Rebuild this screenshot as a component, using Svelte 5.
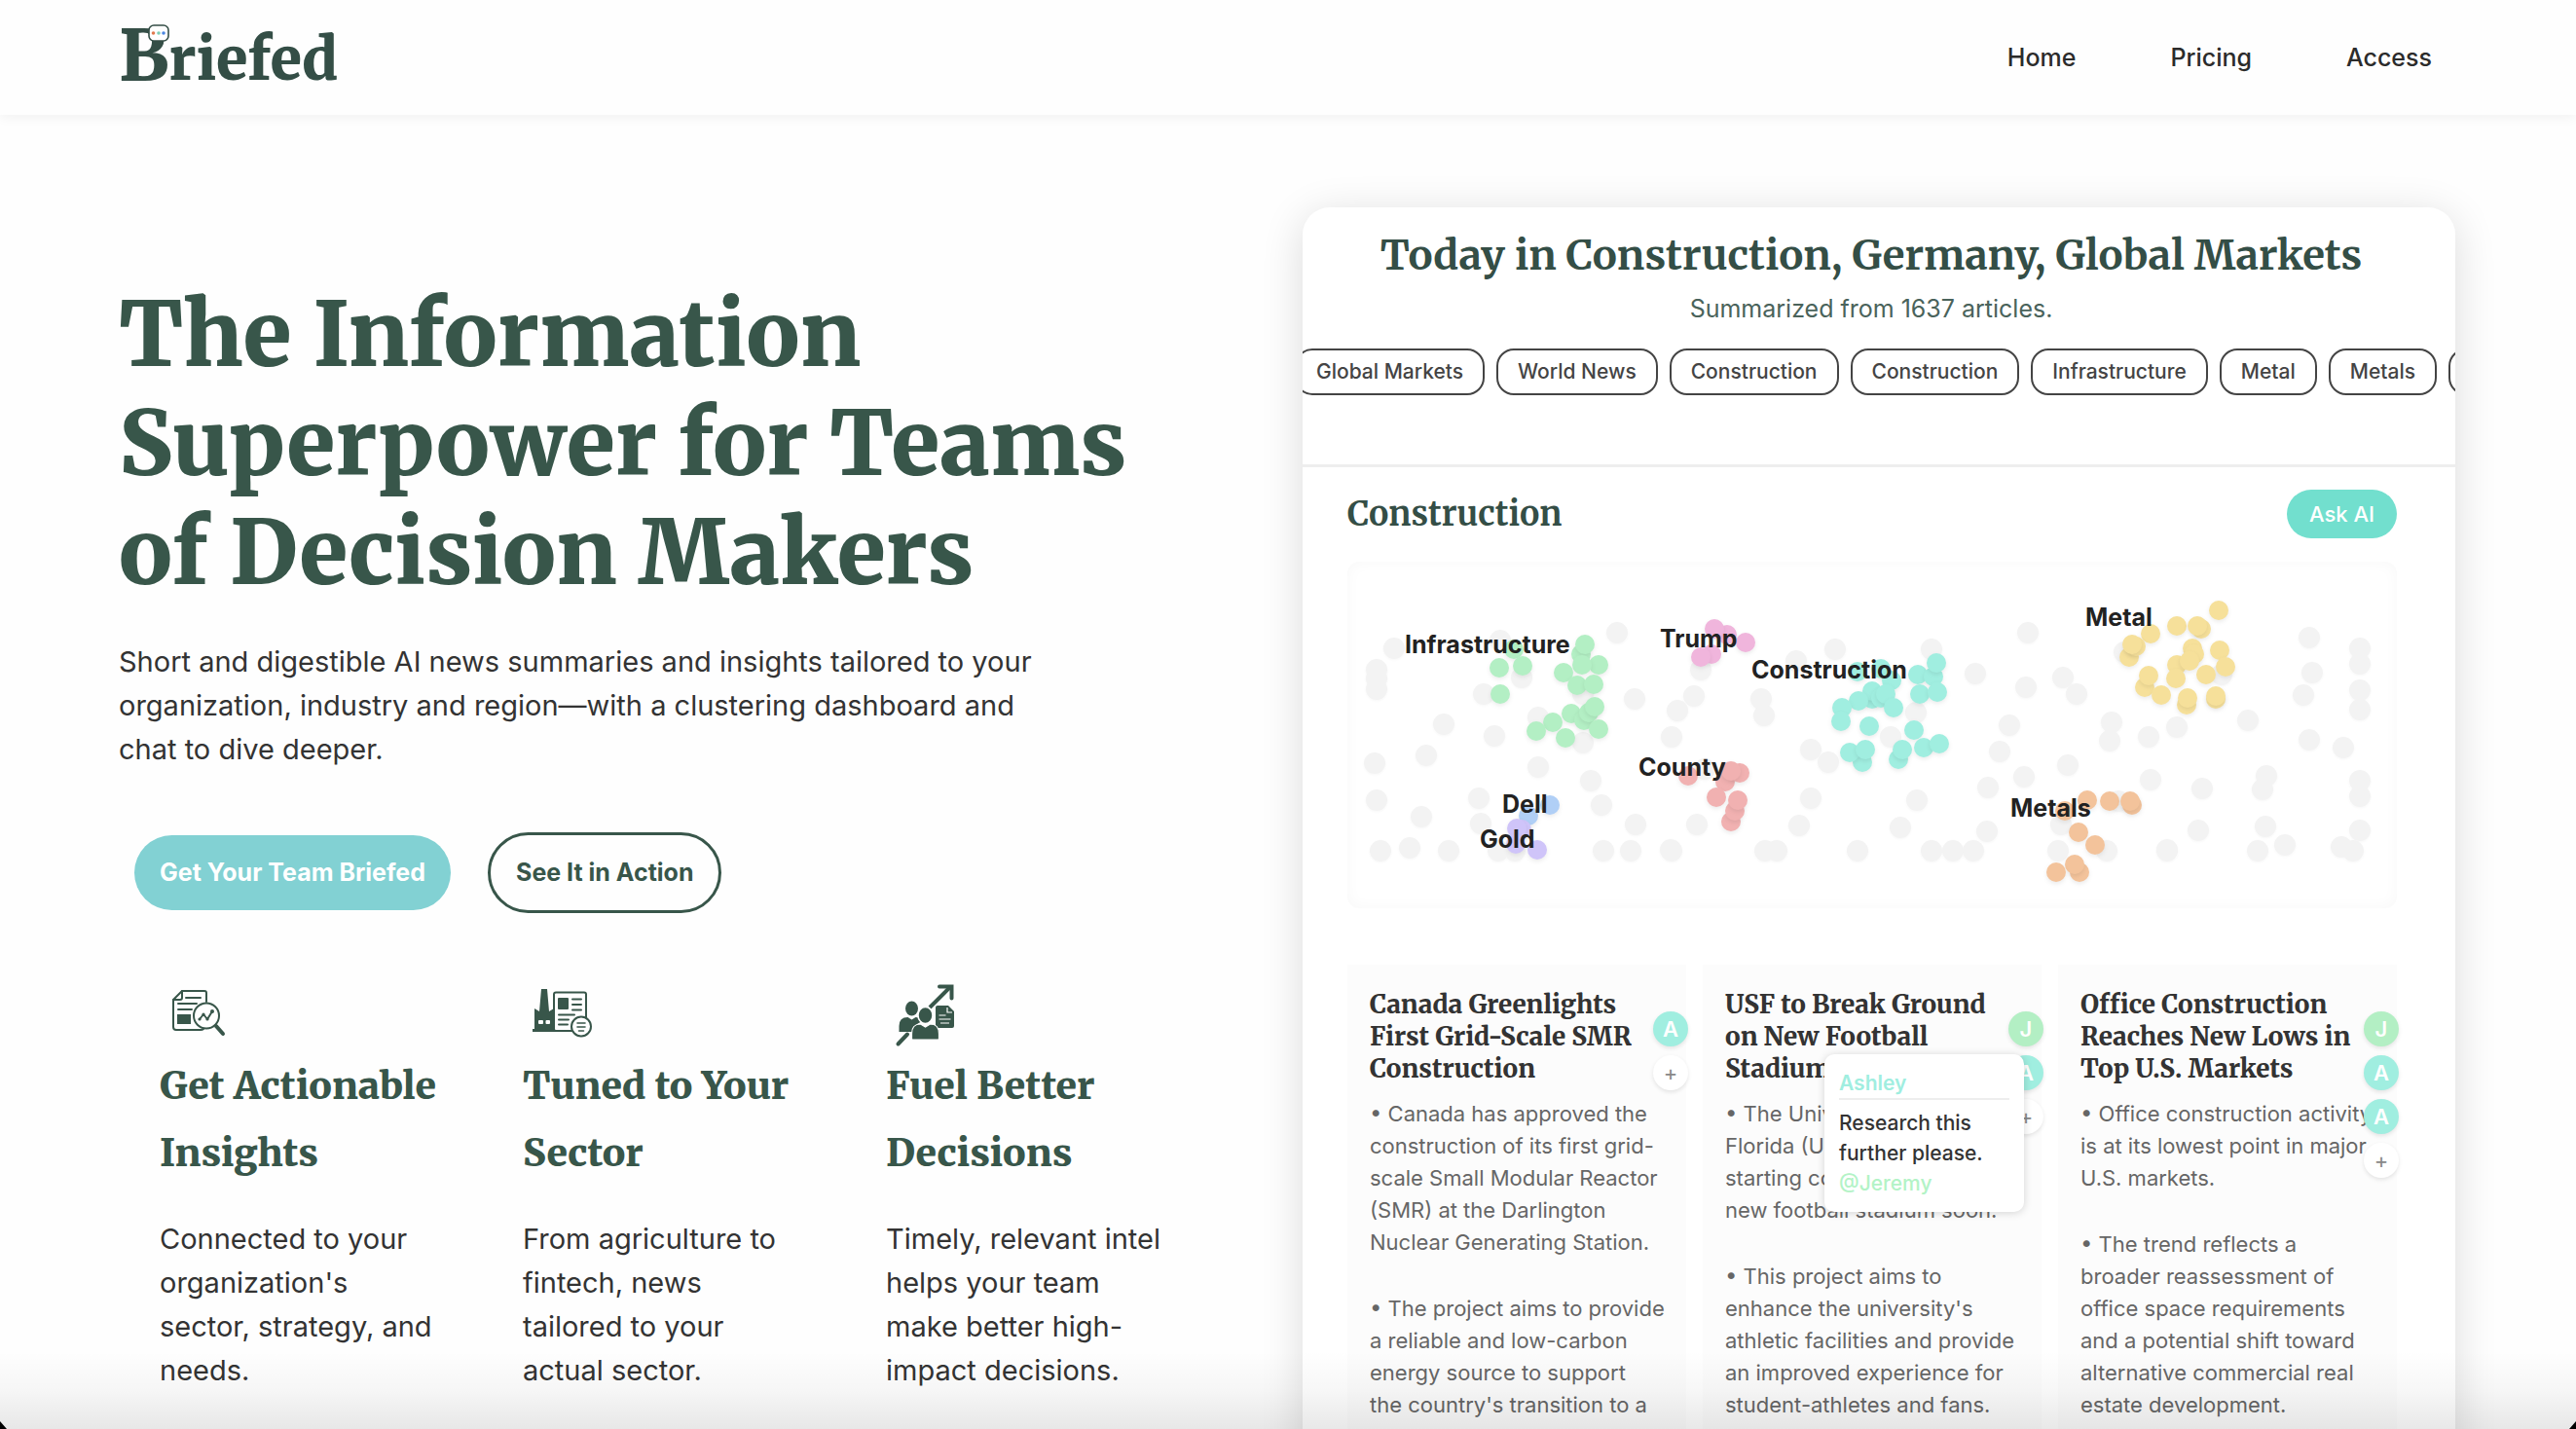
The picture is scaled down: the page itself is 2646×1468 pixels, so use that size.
<script>
  const links = ['Home', 'Pricing', 'Access'];

  const topics = ['Global Markets', 'World News', 'Construction', 'Construction', 'Infrastructure', 'Metal', 'Metals', 'County'];

  const features = [
    { icon: 'insights', title: ['Get Actionable', 'Insights'], text: "Connected to your organization's sector, strategy, and needs." },
    { icon: 'sector', title: ['Tuned to Your', 'Sector'], text: 'From agriculture to fintech, news tailored to your actual sector.' },
    { icon: 'decisions', title: ['Fuel Better', 'Decisions'], text: 'Timely, relevant intel helps your team make better high-impact decisions.' }
  ];

  const noise = [
    [48, 89], [157, 81], [277, 73], [30, 111], [30, 120], [30, 131], [140, 136], [179, 119], [99, 167], [151, 179],
    [196, 160], [242, 186], [81, 199], [28, 207], [196, 211], [250, 225], [30, 245], [135, 243], [261, 250], [76, 262],
    [137, 269], [296, 270], [34, 297], [64, 294], [104, 297], [155, 297], [172, 297], [263, 297], [291, 297], [332, 296],
    [333, 297], [242, 136], [295, 141], [356, 138], [339, 153], [333, 180], [363, 111], [359, 270], [429, 297], [441, 297],
    [425, 141], [428, 158], [461, 102], [501, 90], [476, 193], [494, 206], [476, 243], [464, 271], [524, 297], [367, 213],
    [600, 90], [699, 73], [645, 115], [697, 129], [735, 119], [749, 136], [558, 180], [584, 155], [680, 168], [670, 195],
    [785, 165], [783, 184], [823, 180], [852, 170], [925, 163], [740, 209], [695, 221], [658, 232], [825, 224], [878, 233],
    [585, 245], [568, 273], [657, 277], [600, 297], [622, 297], [643, 297], [730, 297], [733, 270], [780, 297], [842, 296],
    [842, 297], [874, 276], [943, 272], [963, 291], [935, 297], [944, 220], [940, 234], [988, 78], [1040, 89], [1040, 105],
    [1040, 132], [1040, 152], [991, 114], [982, 137], [988, 183], [1023, 191], [1040, 225], [1040, 241], [1040, 276],
    [1021, 293], [1033, 297], [798, 93], [898, 116], [792, 246]
  ];

  const clusters = [
    { name: 'Infrastructure', at: [59, 94], color: '#b3efc4', dots: [[171, 90], [156, 109], [180, 107], [157, 136], [240, 95], [244, 85], [258, 106], [241, 106], [222, 114], [236, 127], [253, 126], [230, 156], [243, 163], [248, 155], [254, 149], [211, 165], [194, 174], [258, 172], [224, 181]] },
    { name: 'Trump', at: [321, 88], color: '#f0b5dc', dots: [[390, 75], [377, 69], [409, 83], [374, 95], [363, 98]] },
    { name: 'Construction', at: [415, 120], color: '#a0eee0', dots: [[524, 113], [539, 141], [539, 133], [525, 143], [508, 150], [507, 164], [536, 169], [529, 206], [516, 196], [532, 193], [548, 110], [559, 122], [548, 140], [553, 136], [561, 150], [586, 116], [602, 118], [605, 104], [588, 136], [606, 134], [582, 173], [566, 203], [570, 193], [592, 191], [608, 187]] },
    { name: 'Metal', at: [758, 66], color: '#f6e09a', dots: [[895, 50], [852, 66], [877, 69], [873, 66], [825, 74], [803, 98], [810, 87], [806, 85], [868, 89], [870, 95], [852, 106], [865, 102], [896, 91], [902, 108], [851, 120], [882, 116], [819, 129], [823, 117], [836, 137], [862, 147], [863, 140], [892, 141], [892, 138]] },
    { name: 'County', at: [299, 220], color: '#f1b1b1', dots: [[350, 220], [388, 226], [403, 217], [394, 215], [379, 242], [394, 267], [398, 256], [401, 245]] },
    { name: 'Dell', at: [159, 258], color: '#b0cff6', dots: [[208, 250], [186, 261]] },
    { name: 'Gold', at: [136, 294], color: '#cfc4f9', dots: [[179, 275], [174, 274], [173, 290], [195, 296]] },
    { name: 'Metals', at: [681, 262], color: '#f3c39b', dots: [[737, 256], [760, 245], [783, 246], [806, 250], [804, 246], [751, 278], [768, 291], [752, 319], [747, 311], [728, 319]] }
  ];

  const articles = [
    {
      title: ['Canada Greenlights', 'First Grid-Scale SMR', 'Construction'],
      points: [
        ['Canada has approved the', 'construction of its first grid-', 'scale Small Modular Reactor', '(SMR) at the Darlington', 'Nuclear Generating Station.'],
        ['The project aims to provide', 'a reliable and low-carbon', 'energy source to support', "the country's transition to a"]
      ],
      people: ['A']
    },
    {
      title: ['USF to Break Ground', 'on New Football', 'Stadium'],
      points: [
        ['The University of South', 'Florida (USF) will be', 'starting construction of a', 'new football stadium soon.'],
        ['This project aims to', "enhance the university's", 'athletic facilities and provide', 'an improved experience for', 'student-athletes and fans.']
      ],
      people: ['J', 'A'],
      note: { author: 'Ashley', lines: ['Research this', 'further please.'], mention: '@Jeremy' }
    },
    {
      title: ['Office Construction', 'Reaches New Lows in', 'Top U.S. Markets'],
      points: [
        ['Office construction activity', 'is at its lowest point in major', 'U.S. markets.'],
        ['The trend reflects a', 'broader reassessment of', 'office space requirements', 'and a potential shift toward', 'alternative commercial real', 'estate development.']
      ],
      people: ['J', 'A', 'A']
    }
  ];
</script>

<div class="page">
  <header>
    <a class="logo" href="#home" aria-label="Briefed">
      <span class="initial">B</span><span>riefed</span>
      <svg class="bubble" viewBox="0 0 22 18" aria-hidden="true">
        <rect x="1" y="1" width="20" height="16" rx="5" fill="#fff" stroke="#344e46" stroke-width="1.6" />
        <circle cx="5.5" cy="9" r="1.8" fill="#e0794f" />
        <circle cx="11" cy="9" r="1.8" fill="#7ccfb9" />
        <circle cx="16" cy="9" r="1.8" fill="#4a86e0" />
      </svg>
    </a>
    <nav>
      {#each links as link}
        <a href="#{link.toLowerCase()}">{link}</a>
      {/each}
    </nav>
  </header>

  <main>
    <section class="intro">
      <h1>The Information<br />Superpower for Teams<br />of Decision Makers</h1>
      <p class="lead">
        Short and digestible AI news summaries and insights tailored to your<br />
        organization, industry and region—with a clustering dashboard and<br />
        chat to dive deeper.
      </p>
      <div class="actions">
        <button class="primary">Get Your Team Briefed</button>
        <button class="outline">See It in Action</button>
      </div>
      <div class="features">
        {#each features as feature}
          <article>
            <svg class="icon" viewBox="0 0 80 80" aria-hidden="true">
              {#if feature.icon === 'insights'}
                <g fill="none" stroke="#38564a" stroke-width="2" stroke-linecap="round" stroke-linejoin="round">
                  <path d="M48 28V19q0-2-2-2H23L14 26V54q0 3 3 3H42q2 0 3-1" />
                  <path d="M23 17v7q0 2-2 2h-7" />
                  <path d="M27 24H42M19 30H38M19 36H33" />
                  <circle cx="48" cy="42.5" r="13" fill="#fff" />
                  <path d="M41 46l4-5 4 5 5-8" />
                  <path d="M58 53l7 8" stroke-width="4" />
                </g>
                <rect x="18" y="41" width="14" height="10" fill="#38564a" />
                <g fill="#38564a"><circle cx="41" cy="46" r="1.6" /><circle cx="45" cy="41" r="1.6" /><circle cx="49" cy="46" r="1.6" /><circle cx="54" cy="38" r="2" /></g>
              {:else if feature.icon === 'sector'}
                <path fill="#38564a" d="M10 59v-3h2V35l5 3 2-23h6l2 23 5-3v21h18v3z" />
                <g fill="#fff"><rect x="16" y="47" width="5" height="4" rx="1" /><rect x="23.500" y="47" width="4.500" height="4" rx="1" /></g>
                <g fill="none" stroke="#38564a" stroke-width="2" stroke-linecap="round">
                  <rect x="32" y="18.500" width="33" height="39.500" rx="2" fill="#fff" />
                  <path d="M51 25.500h9M51 31h9M51 36.500h9M37 41.500h16M37 46.500h10M37 51.500h9" />
                  <circle cx="60" cy="53.500" r="10" fill="#fff" />
                  <path d="M56 50h8M56 54h8M57.500 58h5" stroke-width="1.600" />
                </g>
                <rect x="36" y="24" width="11" height="12" rx="1" fill="#38564a" />
              {:else}
                <g fill="none" stroke="#38564a" stroke-width="4" stroke-linecap="round">
                  <path d="M12.500 71.500l9.500-10" />
                  <path d="M45 34l21-21" stroke-linecap="butt" />
                  <path d="M55 12.500h12.500v12" stroke-linejoin="miter" />
                </g>
                <g fill="#38564a">
                  <ellipse cx="26.500" cy="35" rx="6.500" ry="7.500" />
                  <path d="M13.500 59v-6q0-9 9-9l4 2.500 4-2.500q4 0 5 5-6 2-8 10z" />
                  <path d="M53 32h11l6 6v15q0 2-2 2H53q-2 0-2-2V34q0-2 2-2z" />
                  <ellipse cx="40.500" cy="42" rx="7.500" ry="8.500" stroke="#fff" stroke-width="1.500" />
                  <path d="M26.500 66v-5q0-10 9-10l5 3 5-3q9 0 9 10v5q0 1-1 1h-26q-1 0-1-1z" stroke="#fff" stroke-width="1.200" />
                </g>
                <path d="M54.500 42h7M54.500 46h12M56 50h9M63 34v5h5" fill="none" stroke="#fff" stroke-width="1.200" />
              {/if}
            </svg>
            <h2>{feature.title[0]}<br />{feature.title[1]}</h2>
            <p>{feature.text}</p>
          </article>
        {/each}
      </div>
    </section>

    <section class="preview">
      <div class="digest">
        <h2>Today in Construction, Germany, Global Markets</h2>
        <p>Summarized from 1637 articles.</p>
        <div class="chips">
          {#each topics as topic}
            <button>{topic}</button>
          {/each}
        </div>
      </div>
      <div class="topic">
        <div class="topic-head">
          <h3>Construction</h3>
          <button class="ask">Ask AI</button>
        </div>
        <svg class="map" viewBox="0 0 1078 356" role="img" aria-label="Article clusters">
          <g class="noise">
            {#each noise as [x, y]}
              <circle cx={x} cy={y} r="11" />
            {/each}
          </g>
          {#each clusters as cluster}
            <g class="cluster" fill={cluster.color}>
              {#each cluster.dots as [x, y]}
                <circle cx={x} cy={y} r="10" />
              {/each}
            </g>
          {/each}
          {#each clusters as cluster}
            <text x={cluster.at[0]} y={cluster.at[1]}>{cluster.name}</text>
          {/each}
        </svg>
        <div class="articles">
          {#each articles as item}
            <article>
              <h4>{#each item.title as line}<span>{line}</span>{/each}</h4>
              {#each item.points as point}
                <p>{#each point as line, i}<span>{i === 0 ? '• ' : ''}{line}</span>{/each}</p>
              {/each}
              <div class="people">
                {#each item.people as person}
                  <span class="badge" class:green={person === 'J'}>{person}</span>
                {/each}
                <button class="badge add" aria-label="Add comment">+</button>
              </div>
              {#if item.note}
                <div class="note">
                  <strong>{item.note.author}</strong>
                  {#each item.note.lines as line}<span>{line}</span>{/each}
                  <em>{item.note.mention}</em>
                </div>
              {/if}
            </article>
          {/each}
        </div>
      </div>
    </section>
  </main>
</div>

<style>
  :global(html) {
    background: #000;
  }

  :global(body) {
    overflow: hidden;
  }

  .page {
    --serif: 'Merriweather', 'DejaVu Serif Condensed', 'DejaVu Serif', serif;
    position: relative;
    display: flex;
    flex-direction: column;
    height: 100vh;
    overflow: hidden;
    clip-path: polygon(0 0, 100% 0, 100% calc(100% - 8px), calc(100% - 7px) 100%, 7px 100%, 0 calc(100% - 8px));
    background: #fefefe;
    color: #333;
    font-family: Inter, 'Liberation Sans', sans-serif;
  }

  .page::after {
    content: '';
    position: absolute;
    inset: auto 0 0;
    height: 80px;
    background: linear-gradient(rgba(0, 0, 0, 0), rgba(0, 0, 0, 0.03) 50%, rgba(0, 0, 0, 0.09));
    pointer-events: none;
  }

  h1, h2, h3, h4, p {
    margin: 0;
  }

  h1, h2, h3, h4 {
    font-family: var(--serif);
    font-weight: 700;
  }

  button {
    font: inherit;
    cursor: pointer;
  }

  header {
    display: flex;
    flex: none;
    align-items: center;
    justify-content: space-between;
    height: 118px;
    padding: 0 148px 0 122px;
    box-shadow: 0 2px 12px rgba(0, 0, 0, 0.06);
  }

  .logo {
    position: relative;
    display: flex;
    align-items: baseline;
    color: #344e46;
    font: 900 59px/80px var(--serif);
    text-decoration: none;
  }

  .initial {
    font-size: 72px;
  }

  .bubble {
    position: absolute;
    top: 8px;
    left: 30px;
    width: 22px;
  }

  nav {
    display: flex;
    gap: 97px;
  }

  nav a {
    color: #2b2b2b;
    font-size: 25px;
    font-weight: 500;
    text-decoration: none;
  }

  main {
    display: grid;
    flex: 1;
    grid-template-columns: minmax(0, 1fr) minmax(0, 1184px);
    gap: 72px;
    padding: 95px 124px 0 122px;
    min-height: 0;
  }

  .intro {
    padding-top: 75px;
  }

  h1 {
    color: #38564a;
    font-size: 91px;
    font-weight: 900;
    line-height: 112px;
    white-space: nowrap;
  }

  .lead {
    margin-top: 33px;
    font-size: 29px;
    line-height: 45px;
    white-space: nowrap;
  }

  .actions {
    display: flex;
    align-items: center;
    gap: 38px;
    margin: 63px 0 0 16px;
    font-size: 25px;
    font-weight: 700;
  }

  .actions button {
    padding: 22px 26px;
    border: 0;
    border-radius: 42px;
    line-height: 33px;
  }

  .actions .primary {
    background: #82d1d3;
    color: #fff;
  }

  .actions .outline {
    border: 3px solid #38564a;
    background: none;
    color: #38564a;
  }

  .features {
    display: grid;
    grid-template-columns: repeat(3, minmax(0, 285px));
    gap: 88px;
    margin: 63px 0 0 42px;
  }

  .icon {
    display: block;
    width: 80px;
  }

  .features h2 {
    color: #38564a;
    font-size: 39px;
    font-weight: 900;
    line-height: 69px;
    white-space: nowrap;
  }

  .features p {
    margin-top: 31px;
    font-size: 29px;
    line-height: 45px;
  }

  .preview {
    height: 1500px;
    border-radius: 28px;
    overflow: hidden;
    background: #fff;
    box-shadow: 0 8px 44px rgba(0, 0, 0, 0.14);
  }

  .digest {
    padding: 20px 0 71px;
    border-bottom: 3px solid #eee;
    text-align: center;
  }

  .digest h2 {
    padding-right: 16px;
    color: #344e46;
    font-size: 42px;
    line-height: 58px;
    white-space: nowrap;
  }

  .digest p {
    padding-right: 16px;
    margin-top: 8px;
    color: #4a635b;
    font-size: 25px;
    line-height: 36px;
  }

  .chips {
    display: flex;
    gap: 12px;
    margin: 23px 0 0 -8px;
  }

  .chips button {
    flex: none;
    padding: 10px 20px;
    border: 2px solid #444;
    border-radius: 18px;
    background: none;
    color: #444;
    font-size: 21px;
    font-weight: 500;
    line-height: 24px;
  }

  .topic {
    padding: 23px 60px 0 46px;
  }

  .topic-head {
    display: flex;
    align-items: center;
    justify-content: space-between;
  }

  h3 {
    color: #344e46;
    font-size: 34px;
    line-height: 50px;
  }

  .ask {
    padding: 12px 23px;
    border: 0;
    border-radius: 25px;
    background: #72dfce;
    color: #fff;
    font-size: 22px;
    font-weight: 500;
    line-height: 26px;
  }

  .map {
    display: block;
    width: 100%;
    margin-top: 24px;
    border-radius: 12px;
    box-shadow: inset 0 0 16px rgba(0, 0, 0, 0.03);
  }

  .noise {
    fill: #f3f3f3;
    filter: drop-shadow(0 1px 1px rgba(0, 0, 0, 0.03));
  }

  .cluster circle {
    filter: drop-shadow(0 2px 2px rgba(0, 0, 0, 0.08));
  }

  .map text {
    fill: #222;
    font-size: 25px;
    font-weight: 700;
  }

  .articles {
    display: grid;
    grid-template-columns: repeat(3, minmax(0, 1fr));
    gap: 17px;
    margin-top: 58px;
  }

  .articles article {
    position: relative;
    height: 600px;
    padding: 24px 0 0 23px;
    background: #fcfcfc;
  }

  h4 {
    margin-bottom: 14px;
    color: #333;
    font-size: 26px;
    font-weight: 800;
    line-height: 33px;
  }

  h4 span, .articles p span {
    display: block;
    white-space: nowrap;
  }

  .articles p {
    margin-bottom: 35px;
    color: #666;
    font-size: 22px;
    line-height: 33px;
  }

  .people {
    position: absolute;
    top: 48px;
    right: -2px;
    display: flex;
    flex-direction: column;
    gap: 9px;
  }

  .badge {
    width: 36px;
    border-radius: 50%;
    background: #a0eee0;
    box-shadow: 0 2px 4px rgba(0, 0, 0, 0.1);
    color: #fff;
    font-size: 22px;
    font-weight: 600;
    line-height: 36px;
    text-align: center;
  }

  .green {
    background: #b3efc4;
  }

  .add {
    height: 36px;
    padding: 0;
    border: 0;
    background: #fff;
    color: #888;
    font-weight: 400;
  }

  .note {
    position: absolute;
    top: 92px;
    left: 125px;
    display: flex;
    flex-direction: column;
    width: 175px;
    padding: 14px 15px 4px;
    border-radius: 10px;
    background: #fff;
    box-shadow: 0 1px 9px rgba(0, 0, 0, 0.17);
    color: #333;
    font-size: 21px;
    font-weight: 500;
    line-height: 31px;
    white-space: nowrap;
  }

  .note strong {
    margin-bottom: 8px;
    border-bottom: 2px solid #eee;
    color: #a0eee0;
    font-weight: 600;
  }

  .note em {
    margin-bottom: 10px;
    color: #b3f3c6;
    font-style: normal;
  }
</style>
